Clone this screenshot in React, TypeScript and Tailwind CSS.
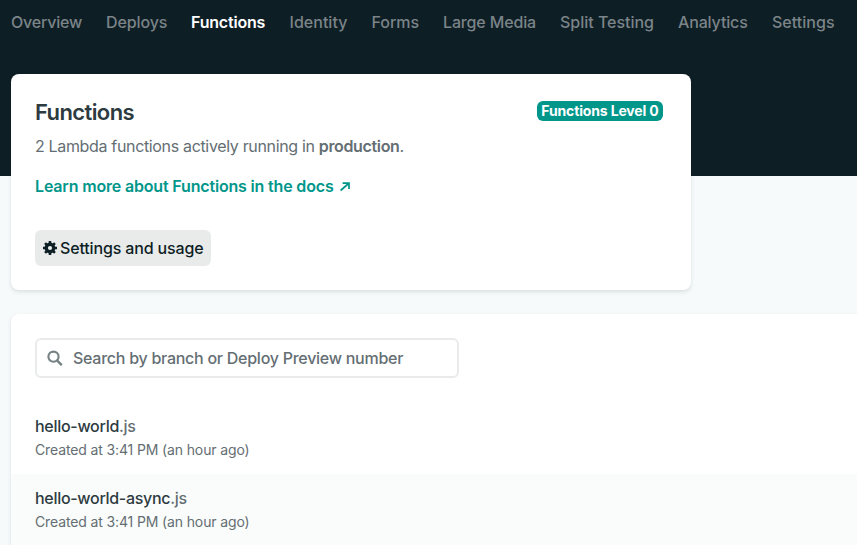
const tabs = [
  { label: "Overview", style: "w-[71px] tracking-[-0.2px]" },
  { label: "Deploys", style: "w-[61px] tracking-[-0.12px]" },
  { label: "Functions", style: "w-[74.5px] tracking-[-0.2px] text-white font-semibold" },
  { label: "Identity", style: "w-[58px] tracking-[0.03px]" },
  { label: "Forms", style: "w-[47.5px] tracking-[-0.05px]" },
  { label: "Large Media", style: "w-[93px] tracking-[-0.15px]" },
  { label: "Split Testing", style: "w-[94px] tracking-[-0.02px]" },
  { label: "Analytics", style: "w-[70px] tracking-[-0.15px]" },
  { label: "Settings", style: "w-[63px] tracking-[0.03px]" },
];

const functions = [
  { name: "hello-world", created: "Created at 3:41 PM (an hour ago)", row: "bg-white", nameStyle: "tracking-[-0.29px]" },
  { name: "hello-world-async", created: "Created at 3:41 PM (an hour ago)", row: "bg-[#fafcfb]", nameStyle: "tracking-[-0.3px]" },
];

function SearchIcon() {
  return (
    <svg className="size-4 shrink-0" viewBox="0 0 16 16" fill="none" stroke="#778284" strokeWidth="2.1">
      <circle cx="6.5" cy="6.7" r="5.1" />
      <path d="M10.2 10.6L14.8 15.2" strokeWidth="2.4" />
    </svg>
  );
}

function GearIcon() {
  return (
    <svg className="size-3.5 shrink-0" viewBox="0 0 14 14" fill="none" stroke="currentColor">
      <circle cx="7" cy="7" r="3.75" strokeWidth="3.3" />
      <path
        d="M7 0V2.5M7 11.5V14M0 7H2.5M11.5 7H14M2.05 2.05L3.8 3.8M10.2 10.2L11.95 11.95M2.05 11.95L3.8 10.2M10.2 3.8L11.95 2.05"
        strokeWidth="2.6"
      />
    </svg>
  );
}

function ArrowIcon() {
  return (
    <svg className="ml-1.5 mt-px size-[10px]" viewBox="0 0 10 10" fill="none" stroke="currentColor" strokeWidth="1.7">
      <path d="M2.6 1.2H9V6.9M8.6 1.5L0.6 8.5" />
    </svg>
  );
}

export default function App() {
  return (
    <div className="h-[545px] w-[857px] overflow-hidden bg-[linear-gradient(#0e1e25_176px,#f6fafb_176px)] pl-[11px] font-['Inter',sans-serif] text-base leading-6 text-[#646e73]">
      <nav className="flex h-[74px] gap-6 pt-2.5 font-medium text-[#7b8488]">
        {tabs.map((t) => (
          <a key={t.label} className={`h-6 shrink-0 whitespace-nowrap ${t.style}`}>
            <span>{t.label}</span>
          </a>
        ))}
      </nav>
      <section className="h-[216px] w-[680px] rounded-lg bg-white px-6 pt-6 shadow-[0_2px_4px_rgba(14,30,37,0.12)]">
        <div className="flex items-start justify-between pr-1">
          <h1 className="text-[22px] font-semibold leading-7 tracking-[-0.6px] text-[#2d3b41]">Functions</h1>
          <span className="mt-[3px] flex h-5 w-[126px] items-center justify-center whitespace-nowrap rounded-md bg-[#00968a] text-sm font-bold tracking-[-0.15px] text-white">
            Functions Level 0
          </span>
        </div>
        <p className="mt-2 whitespace-nowrap tracking-[-0.34px]">
          2 Lambda functions actively running in <b className="font-semibold">production</b>.
        </p>
        <a className="mt-4 flex items-center whitespace-nowrap font-semibold tracking-[-0.17px] text-[#00968a]">
          <span>Learn more about Functions in the docs</span>
          <ArrowIcon />
        </a>
        <button className="mt-8 flex h-9 w-44 items-center gap-[3px] whitespace-nowrap rounded-md bg-[#e9ebeb] pl-2 font-medium tracking-[-0.15px] text-[#0e1e25]">
          <GearIcon />
          <span>Settings and usage</span>
        </button>
      </section>
      <section className="mt-6 h-[260px] rounded-tl-lg bg-white pt-6 shadow-[0_2px_4px_rgba(14,30,37,0.12)]">
        <div className="ml-6 flex h-10 w-[424px] items-center gap-2.5 rounded-md border-2 border-[#e9ebeb] pl-2.5 font-medium">
          <SearchIcon />
          <span className="whitespace-nowrap tracking-[-0.26px]">Search by branch or Deploy Preview number</span>
        </div>
        <div className="mt-6">
          {functions.map((f) => (
            <div key={f.name} className={`h-[72px] px-6 pt-3 ${f.row}`}>
              <div className={`font-medium ${f.nameStyle}`}>
                <span className="text-[#2d3b41]">{f.name}</span>.js
              </div>
              <div className="text-sm leading-6 tracking-[-0.13px]">{f.created}</div>
            </div>
          ))}
        </div>
      </section>
    </div>
  );
}
